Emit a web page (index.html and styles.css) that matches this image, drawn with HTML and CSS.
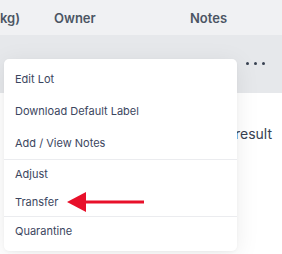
FILE: index.html
```html
<!DOCTYPE html>
<html lang="en">
<head>
    <meta charset="UTF-8">
    <meta name="viewport" content="width=device-width, initial-scale=1.0">
    <title>Lots</title>
    <link rel="stylesheet" href="styles.css">
</head>
<body>
    <div class="table">
        <div class="head-row">
            <span class="col-weight">kg)</span>
            <span class="col-owner">Owner</span>
            <span class="col-notes">Notes</span>
        </div>

        <div class="row active">
            <span class="col-weight"></span>
            <span class="col-owner"></span>
            <span class="col-notes">
                <span class="dots"><i></i><i></i><i></i></span>
            </span>
        </div>

        <div class="row">
            <span class="col-weight"></span>
            <span class="col-owner"></span>
            <span class="col-notes result">No result</span>
        </div>
    </div>

    <div class="menu">
        <div class="menu-group first">
            <a class="menu-item tall">Edit Lot</a>
            <a class="menu-item tall">Download Default Label</a>
            <a class="menu-item tall">Add / View Notes</a>
        </div>
        <div class="menu-group">
            <a class="menu-item">Adjust</a>
            <a class="menu-item">Transfer</a>
        </div>
        <div class="menu-group last">
            <a class="menu-item">Quarantine</a>
        </div>

        <!-- callout arrow pointing at Transfer -->
        <svg class="arrow" width="80" height="22" viewBox="0 0 80 22">
            <polygon points="0,11 19,1 19,21" fill="#e8102a"/>
            <rect x="18" y="9.5" width="59" height="3" fill="#e8102a"/>
        </svg>
    </div>
</body>
</html>
```

FILE: styles.css
```css
body {
    margin: 0;
    width: 282px;
    height: 254px;
    overflow: hidden;
    font-family: Inter, "Liberation Sans", sans-serif;
    background: #ffffff;
    position: relative;
}

.head-row,
.row {
    display: grid;
    grid-template-columns: 54px 136px 1fr;
    align-items: center;
}

.head-row {
    height: 35px;
    background: #f0f1f3;
    font-size: 13px;
    font-weight: 600;
    color: #4b5563;
}

.row {
    height: 58px;
}

.row.active {
    background: #e6e8eb;
}

.dots {
    display: flex;
    gap: 5px;
    margin-left: 56px;
    margin-top: -2px;
}

.dots i {
    width: 3px;
    height: 3px;
    border-radius: 50%;
    background: #374151;
}

.result {
    font-size: 14px;
    color: #374151;
    text-align: right;
    white-space: nowrap;
    padding-right: 10px;
    margin-top: 22px;
}

.menu {
    position: absolute;
    left: 4px;
    top: 59px;
    width: 233px;
    background: #ffffff;
    border-radius: 5px;
    box-shadow: 0 4px 24px rgba(0, 0, 0, 0.08), 0 1px 3px rgba(0, 0, 0, 0.04);
}

.menu-group {
    display: flex;
    flex-direction: column;
    border-bottom: 1px solid #ebecef;
}

.menu-group.first {
    padding-top: 4px;
}

.menu-group.last {
    border-bottom: none;
    padding-bottom: 6px;
}

.menu-item {
    display: flex;
    align-items: center;
    height: 28px;
    padding-left: 11px;
    font-size: 11px;
    color: #3b4660;
}

.menu-item.tall {
    height: 32px;
}

.arrow {
    position: absolute;
    left: 63px;
    top: 132px;
}
```
